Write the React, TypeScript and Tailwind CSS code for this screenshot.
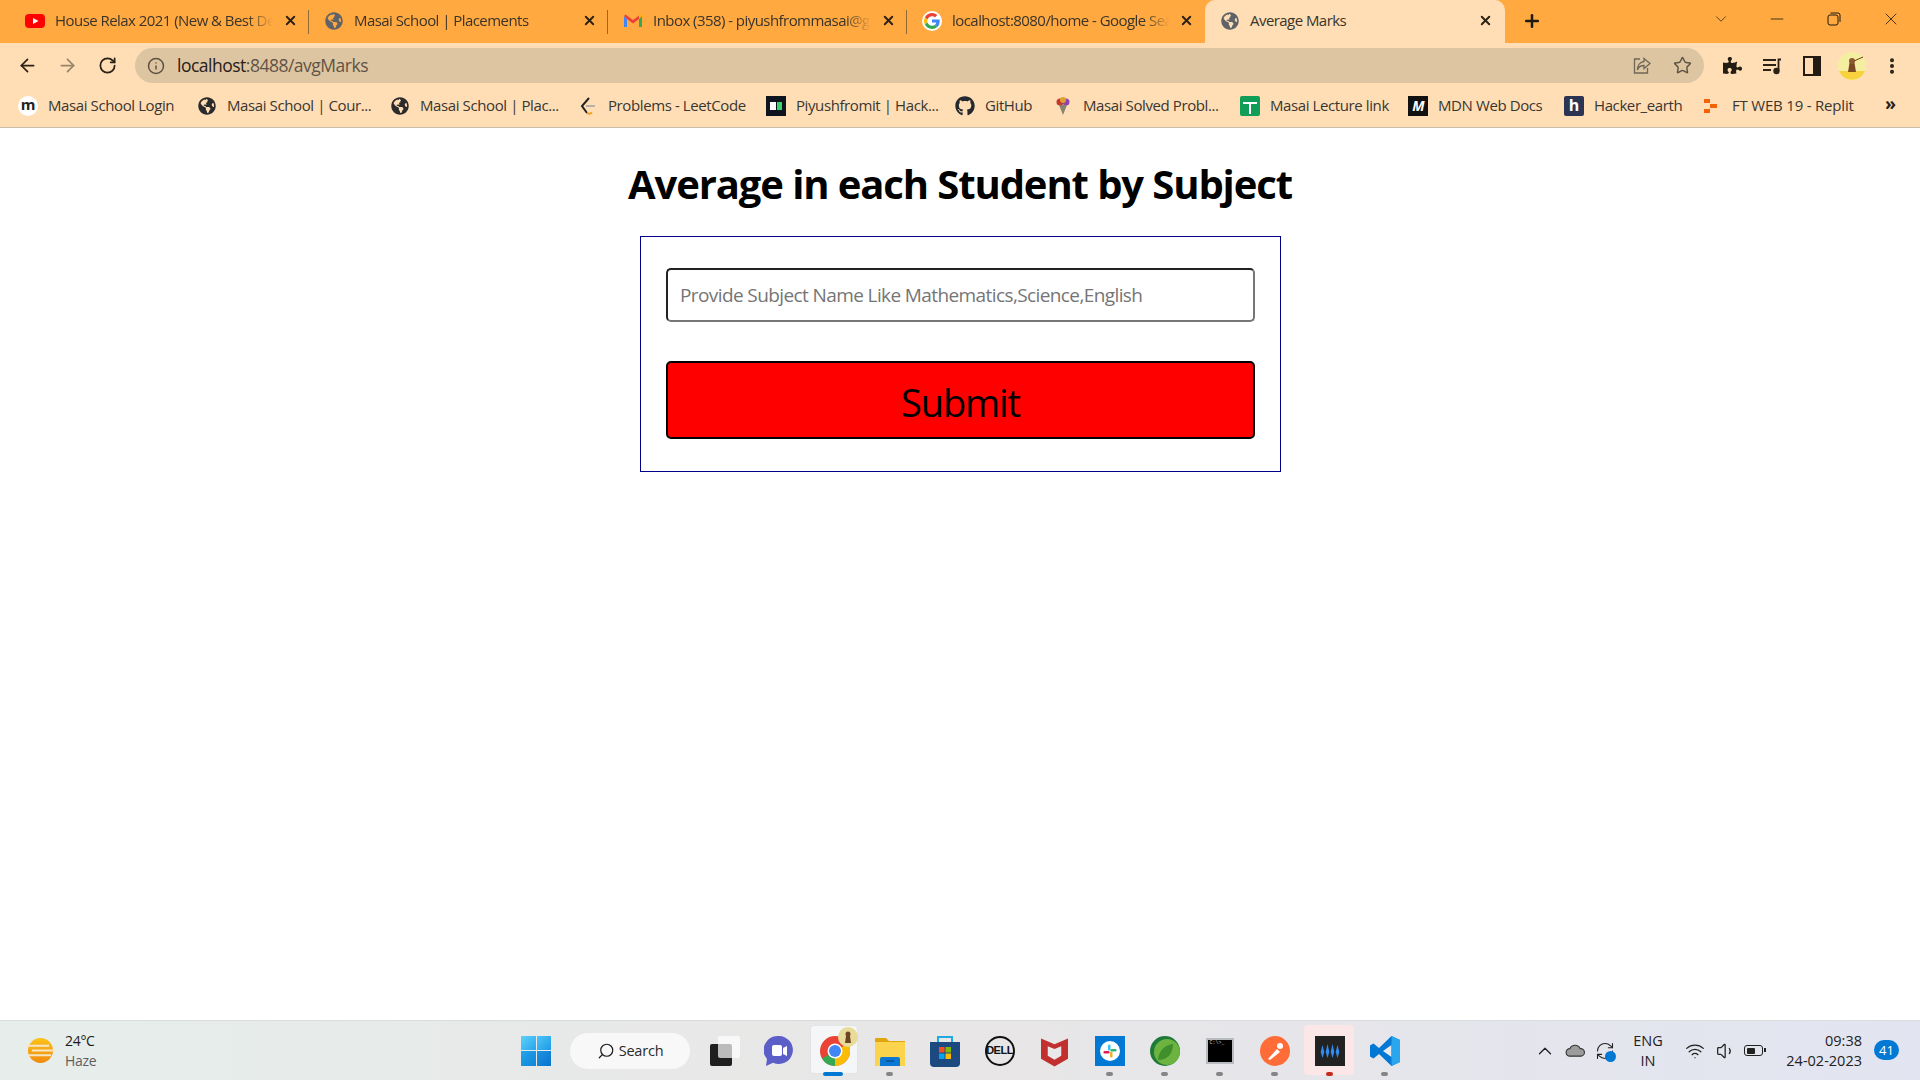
import React from "react";
import { ArrowLeft, ArrowRight, RotateCw, Info, Star, Minus, X, Plus, ChevronDown, ChevronUp, Search, MoreVertical, Wifi, Volume1, RefreshCw } from "lucide-react";
import { FaGlobeAmericas, FaGithub, FaPuzzlePiece } from "react-icons/fa";

const UI = "font-['Open_Sans','Noto_Sans',sans-serif]";

function YouTube() {
  return (
    <svg viewBox="0 0 20 20" className="w-5 h-5 shrink-0">
      <rect x="0" y="3" width="20" height="14" rx="4" fill="#f00" />
      <path d="M8 7l5.5 3L8 13z" fill="#fff" />
    </svg>
  );
}
function Gmail() {
  return (
    <svg viewBox="0 0 20 20" className="w-5 h-5 shrink-0">
      <path d="M1 5v11h3V8z" fill="#4285f4" />
      <path d="M16 8v8h3V5z" fill="#34a853" />
      <path d="M1 5l3 3 6 4.5L16 8l3-3-1.5-1.5L10 9 2.5 3.5z" fill="#ea4335" />
      <path d="M16 8l3-3V4l-1.5-.5L16 4.6z" fill="#fbbc04" />
    </svg>
  );
}
function GoogleG() {
  return (
    <div className="w-5 h-5 rounded-full bg-white flex items-center justify-center shrink-0">
      <svg viewBox="0 0 48 48" className="w-4 h-4">
        <path fill="#ea4335" d="M24 9.5c3.5 0 6.7 1.3 9.2 3.5l6.800-6.800C35.800 2.400 30.300 0 24 0 14.600 0 6.500 5.400 2.600 13.200l8 6.200C12.400 13.700 17.700 9.500 24 9.500z" />
        <path fill="#4285f4" d="M47 24.500c0-1.600-.2-3.200-.4-4.700H24v9h13c-.6 3-2.300 5.500-4.800 7.200l7.700 6C44.400 37.800 47 31.700 47 24.500z" />
        <path fill="#fbbc05" d="M10.600 28.600c-.5-1.400-.8-3-.8-4.600s.3-3.200.8-4.600l-8-6.200C.9 16.500 0 20.100 0 24s.9 7.500 2.600 10.800z" />
        <path fill="#34a853" d="M24 48c6.500 0 11.900-2.100 15.900-5.800l-7.700-6c-2.200 1.500-5 2.300-8.200 2.300-6.300 0-11.600-4.200-13.400-9.900l-8 6.200C6.500 42.600 14.600 48 24 48z" />
      </svg>
    </div>
  );
}
function Tab({ icon, title, w, textW, sep = true }: { icon: React.ReactNode; title: string; w: string; textW: string; sep?: boolean }) {
  return (
    <div className={`${w} h-[43px] flex items-center shrink-0 relative pb-[2px]`}>
      <div className="ml-[15px] w-5 flex justify-center shrink-0">{icon}</div>
      <div className={`ml-[10px] ${textW} whitespace-nowrap overflow-hidden text-[15px] tracking-[-0.55px] text-[#3a342a] [mask-image:linear-gradient(to_right,black_88%,transparent)]`}>{title}</div>
      <X size={15} strokeWidth={3} className="absolute right-[11px] top-[13px] text-[#2b2115]" />
      {sep && <div className="absolute right-0 top-[10px] h-[24px] w-px bg-[#8f6a33]" />}
    </div>
  );
}
function Bookmark({ icon, label, w }: { icon: React.ReactNode; label: string; w: string }) {
  return (
    <div className="flex items-center shrink-0">
      <div className="w-5 h-5 flex items-center justify-center shrink-0">{icon}</div>
      <div className={`ml-[10px] ${w} whitespace-nowrap text-[15px] tracking-[-0.4px] text-[#3a3630]`}>{label}</div>
    </div>
  );
}
function TaskIcon({ children, dot }: { children: React.ReactNode; dot?: string }) {
  return (
    <div className="w-[55px] h-[60px] flex items-center justify-center relative shrink-0">
      {children}
      {dot && <div className={`absolute bottom-[5px] left-[24px] w-[7px] h-[4px] rounded-full ${dot}`} />}
    </div>
  );
}

export default function App() {
  return (
    <div className={`w-[1920px] h-[1080px] flex flex-col overflow-hidden bg-white ${UI}`}>
      {/* Tab strip */}
      <div className="h-[43px] bg-[#ffa940] flex items-start shrink-0 pl-[10px]">
        <Tab w="w-[299px]" textW="w-[218px]" icon={<YouTube />} title="House Relax 2021 (New & Best Deep House Music)" />
        <Tab w="w-[299px]" textW="w-[218px]" icon={<FaGlobeAmericas size={18} className="text-[#5f6368]" />} title="Masai School | Placements" />
        <Tab w="w-[299px]" textW="w-[218px]" icon={<Gmail />} title="Inbox (358) - piyushfrommasai@gmail.com" />
        <Tab w="w-[298px]" textW="w-[218px]" sep={false} icon={<GoogleG />} title="localhost:8080/home - Google Search" />
        <div className="w-[300px] h-[43px] rounded-t-[10px] bg-[#ffdeb6] relative shrink-0">
          <div className="flex items-center h-full pb-[2px]">
            <div className="ml-[15px] w-5 flex justify-center"><FaGlobeAmericas size={18} className="text-[#5f6368]" /></div>
            <div className="ml-[10px] text-[15px] tracking-[-0.55px] text-[#3a342a] whitespace-nowrap">Average Marks</div>
          </div>
          <X size={15} strokeWidth={3} className="absolute right-[12px] top-[13px] text-[#2b2115]" />
        </div>
        <Plus size={20} strokeWidth={3} className="ml-[17px] mt-[11px] text-[#1f1a12]" />
        <div className="flex-1" />
        <ChevronDown size={18} strokeWidth={1} className="mt-[10px] mr-[37px] text-[#2b2115]" />
        <Minus size={20} strokeWidth={1} className="mt-[9px] mr-[40px] text-[#1f1a12]" />
        <svg viewBox="0 0 14 14" className="w-[14px] h-[14px] mt-[12px] mr-[40px]" fill="none" stroke="#1f1a12" strokeWidth="1">
          <rect x="1" y="3" width="10" height="10" rx="2" />
          <path d="M3.500 1h7.500a2 2 0 0 1 2 2v7" />
        </svg>
        <X size={20} strokeWidth={1} className="mt-[9px] mr-[19px] text-[#1f1a12]" />
      </div>

      {/* Toolbar */}
      <div className="h-[44px] bg-[#ffdeb6] flex items-center shrink-0 pl-[7px] pt-[1px]">
        <div className="w-10 flex justify-center"><ArrowLeft size={21} strokeWidth={2} className="text-[#2b2115]" /></div>
        <div className="w-10 flex justify-center"><ArrowRight size={21} strokeWidth={2} className="text-[#97846a]" /></div>
        <div className="w-10 flex justify-center"><RotateCw size={19} strokeWidth={2.2} className="text-[#2b2115]" /></div>
        <div className="ml-2 w-[1569px] h-[35px] rounded-full bg-[#dec5a1] flex items-center pl-[12px] pr-[11px]">
          <Info size={18} strokeWidth={2} className="text-[#5c5244] shrink-0" />
          <div className="ml-[12px] text-[17.500px] tracking-[-0.5px] whitespace-nowrap text-[#25201a]">
            localhost<span className="text-[#5e5446]">:8488/avgMarks</span>
          </div>
          <div className="flex-1" />
          <svg viewBox="0 0 20 20" className="w-5 h-5 text-[#6f675a]" fill="none" stroke="currentColor" strokeWidth="1.300">
            <path d="M8 3H2.500v14h13V12" />
            <path d="M12 2.500l6 5-6 5V9.500C9 9.500 6.500 11 5.500 14c0-4.500 2.500-8 6.500-8.500z" />
          </svg>
          <Star size={19} strokeWidth={1.8} className="ml-[21px] mr-[1px] text-[#5e5446]" />
        </div>
        <div className="ml-[8px] w-10 flex justify-center"><FaPuzzlePiece size={19} className="text-[#231c12]" /></div>
        <div className="w-10 flex justify-center">
          <svg viewBox="0 0 20 20" className="w-5 h-5 text-[#2b2115]" fill="none" stroke="currentColor" strokeWidth="1.800">
            <path d="M1 4h13M1 9h13M1 14h8" />
            <circle cx="14.500" cy="15" r="2.300" fill="currentColor" />
            <path d="M16.500 15V3.500H19" />
          </svg>
        </div>
        <div className="w-10 flex justify-center">
          <div className="w-[18px] h-[20px] border-[2.5px] border-[#231c12] border-r-[8px]" />
        </div>
        <div className="w-10 flex justify-center">
          <svg viewBox="0 0 28 28" className="w-7 h-7">
            <circle cx="14" cy="14" r="14" fill="#f4efa0" />
            <path d="M1 19h26a14 14 0 0 1-26 0z" fill="#f7d23e" />
            <path d="M10 20l1.500-9h5l1.500 9z" fill="#7a4a22" />
            <circle cx="14" cy="9" r="3" fill="#8a5a30" />
            <path d="M16 9l9-4" stroke="#6b3e1a" strokeWidth="1" />
          </svg>
        </div>
        <div className="w-10 flex justify-center"><MoreVertical size={20} strokeWidth={2.8} className="text-[#231c12]" /></div>
      </div>

      {/* Bookmarks */}
      <div className="h-[41px] bg-[#ffdeb6] border-b border-[#c9bda9] flex items-center shrink-0 pl-[18px] gap-[21px] pb-[3px]">
        <Bookmark w="w-[128px]" label="Masai School Login" icon={<div className="w-5 h-5 rounded-full bg-white flex items-center justify-center text-[15px] font-bold leading-none pb-[3px] text-[#222]">m</div>} />
        <Bookmark w="w-[142px]" label="Masai School | Cour..." icon={<FaGlobeAmericas size={18} className="text-[#2b2b2b]" />} />
        <Bookmark w="w-[137px]" label="Masai School | Plac..." icon={<FaGlobeAmericas size={18} className="text-[#2b2b2b]" />} />
        <Bookmark w="w-[137px]" label="Problems - LeetCode" icon={
          <svg viewBox="0 0 20 20" className="w-5 h-5" fill="none" strokeWidth="2">
            <path d="M11 2L4 10l5 7" stroke="#222" />
            <path d="M9 17c2 1 4 .5 5-.5" stroke="#f0a020" />
            <path d="M8 10h9" stroke="#b5b0a8" />
          </svg>} />
        <Bookmark w="w-[138px]" label="Piyushfromit | Hack..." icon={
          <div className="w-5 h-5 bg-[#0e141e] flex items-center justify-center gap-px">
            <span className="w-[6px] h-[8px] bg-white" /><span className="w-[5px] h-[8px] bg-[#39d46b]" />
          </div>} />
        <Bookmark w="w-[47px]" label="GitHub" icon={<FaGithub size={20} className="text-[#24292f]" />} />
        <Bookmark w="w-[136px]" label="Masai Solved Probl..." icon={
          <svg viewBox="0 0 20 20" className="w-5 h-5">
            <circle cx="7" cy="6" r="3.500" fill="#c0392b" /><circle cx="13" cy="6" r="3.500" fill="#8e44ad" />
            <circle cx="10" cy="4" r="3" fill="#e0a030" /><path d="M6 9h8l-4 10z" fill="#8a8172" />
          </svg>} />
        <Bookmark w="w-[117px]" label="Masai Lecture link" icon={
          <div className="w-5 h-5 bg-[#0f9d58] rounded-[2px] relative">
            <div className="absolute left-[3px] right-[3px] top-[6px] h-[2px] bg-white" />
            <div className="absolute top-[6px] bottom-[2px] left-[9px] w-[2px] bg-white" />
          </div>} />
        <Bookmark w="w-[105px]" label="MDN Web Docs" icon={<div className="w-5 h-5 bg-[#111] text-white text-[14px] italic leading-5 text-center font-bold tracking-[-1px]">M</div>} />
        <Bookmark w="w-[87px]" label="Hacker_earth" icon={<div className="w-5 h-5 bg-[#2c3454] rounded-[2px] text-white text-[16px] leading-[18px] text-center font-bold">h</div>} />
        <div className="flex items-center shrink-0 ml-[2px]">
          <svg viewBox="0 0 14 20" className="w-[14px] h-5">
            <path d="M0 3h6v4H0zM6 8h7v4H6zM0 13h6v4H0z" fill="#f26207" />
          </svg>
          <div className="ml-[14px] w-[121px] whitespace-nowrap text-[15px] tracking-[-0.2px] text-[#3a3630]">FT WEB 19 - Replit</div>
        </div>
        <div className="ml-[11px] text-[18px] leading-none font-bold text-[#2b2115] pb-[5px]">»</div>
      </div>

      {/* Page */}
      <main className="flex-1 bg-white flex flex-col items-center">
        <h1 className="mt-[28px] h-[55px] text-[40px] leading-[55px] font-bold text-black tracking-[-1.1px] whitespace-nowrap">Average in each Student by Subject</h1>
        <form className="mt-[25px] ml-[1px] w-[641px] h-[236px] border border-[#00008b] pt-[31px] pl-[25px]">
          <input
            placeholder="Provide Subject Name Like Mathematics,Science,English"
            className="block w-[589px] h-[54px] border-2 border-t-[#222] border-l-[#222] border-r-[#767676] border-b-[#767676] rounded-[5px] px-[12px] text-[19px] tracking-[-0.6px] placeholder:text-[#757575] outline-none"
          />
          <button type="button" className="mt-[39px] block w-[589px] h-[78px] border-2 border-black rounded-[5px] bg-[#f00] text-[38px] leading-none text-black tracking-[-1.1px] pt-[3px]">Submit</button>
        </form>
      </main>

      {/* Taskbar */}
      <div className="h-[60px] shrink-0 border-t border-[#d9dcdc] bg-gradient-to-r from-[#e6eeeb] via-[#e8e6e6] to-[#e2e5f1] flex items-center relative">
        <div className="w-[508px] flex items-center pl-[26px] shrink-0">
          <svg viewBox="0 0 30 28" className="w-[29px] h-[27px]">
            <defs><linearGradient id="sun" x1="0" y1="0" x2="0" y2="1"><stop offset="0" stopColor="#fbc318" /><stop offset="1" stopColor="#f08a10" /></linearGradient></defs>
            <circle cx="15" cy="14" r="13" fill="url(#sun)" />
            <path d="M0 9h24M6 14h24M2 19h24" stroke="#f5e6c8" strokeWidth="2" />
          </svg>
          <div className="ml-[10px] text-[14px] leading-[20px] tracking-[-0.3px]">
            <div className="text-[#1b1b1b]">24°C</div>
            <div className="text-[#5f5f5f]">Haze</div>
          </div>
        </div>
        <TaskIconWin />
        <div className="ml-[18px] w-[122px] h-[38px] rounded-full bg-[#f8f8f8] border border-[#e8e8e8] flex items-center justify-center shrink-0">
          <Search size={18} strokeWidth={1.6} className="-scale-x-100 text-[#1b1b1b]" />
          <span className="ml-[4px] text-[14.500px] tracking-[-0.2px] text-[#2a2a2a]">Search</span>
        </div>
        <div className="ml-[19px] w-[30px] h-[30px] relative shrink-0">
          <div className="absolute left-0 bottom-0 w-[22px] h-[22px] bg-[#1f1f1f] rounded-[2px]" />
          <div className="absolute right-0 top-0 w-[22px] h-[22px] bg-white/70 rounded-[2px]" />
        </div>
        <div className="ml-[24px] w-[30px] h-[32px] shrink-0">
          <svg viewBox="0 0 30 32" className="w-full h-full">
            <path d="M15 1a14 14 0 1 1-6 26.700L2 31l1-7A14 14 0 0 1 15 1z" fill="#5b5fc7" />
            <rect x="8" y="10" width="10" height="11" rx="2" fill="#fff" />
            <path d="M19 13l4-2v10l-4-2z" fill="#fff" />
          </svg>
        </div>
        <div className="ml-[13px] flex items-center shrink-0">
          <TaskIcon dot="">
            <div className="absolute left-[3px] top-[4px] w-[48px] h-[49px] rounded-[4px] bg-[#f5f6f8] border border-[#e3e4e7]" />
            <svg viewBox="0 0 30 30" className="w-[30px] h-[30px] relative">
              <circle cx="15" cy="15" r="15" fill="#ea4335" />
              <path d="M15 15L2 22.500A15 15 0 0 0 15 30z" fill="#34a853" />
              <path d="M15 15l13-7.500A15 15 0 0 1 15 30z" fill="#fbbc05" />
              <circle cx="15" cy="15" r="7.500" fill="#fff" />
              <circle cx="15" cy="15" r="6" fill="#4285f4" />
            </svg>
            <svg viewBox="0 0 20 20" className="absolute left-[31px] top-[6px] w-5 h-5">
              <circle cx="10" cy="10" r="10" fill="#e9dc9a" />
              <path d="M7 16l1-7h4l1 7z" fill="#6d4520" />
              <circle cx="10" cy="7" r="2.500" fill="#6d4520" />
            </svg>
            <div className="absolute bottom-[5px] left-[16px] w-[20px] h-[4px] rounded-full bg-[#0078d4]" />
          </TaskIcon>
          <TaskIcon dot="bg-[#858585]">
            <svg viewBox="0 0 30 30" className="w-[30px] h-[30px]">
              <path d="M0 3a1 1 0 0 1 1-1h10l3 3h16v4H0z" fill="#e0a50f" />
              <path d="M0 6h30v24H0z" fill="#fcd34d" />
              <path d="M5 23a2 2 0 0 1 2-2h16a2 2 0 0 1 2 2v7H5z" fill="#0a78d4" />
              <path d="M11 25h8" stroke="#063a6b" strokeWidth="1" />
            </svg>
          </TaskIcon>
          <TaskIcon>
            <svg viewBox="0 0 30 32" className="w-[30px] h-[32px]">
              <path d="M8 7V2h14v5" stroke="#21a9e1" strokeWidth="2" fill="none" />
              <path d="M0 7h30v21a4 4 0 0 1-4 4H4a4 4 0 0 1-4-4z" fill="#1c4a80" />
              <rect x="9" y="12" width="5.500" height="5.500" fill="#f25022" />
              <rect x="15.500" y="12" width="5.500" height="5.500" fill="#7fba00" />
              <rect x="9" y="18.500" width="5.500" height="5.500" fill="#00a4ef" />
              <rect x="15.500" y="18.500" width="5.500" height="5.500" fill="#ffb900" />
            </svg>
          </TaskIcon>
          <TaskIcon>
            <div className="w-[30px] h-[30px] rounded-full border-[2.5px] border-[#111] flex items-center justify-center bg-transparent">
              <span className="font-['Liberation_Sans',sans-serif] text-[11px] font-bold text-[#111] tracking-[-0.5px]">DELL</span>
            </div>
          </TaskIcon>
          <TaskIcon>
            <svg viewBox="0 0 28 32" className="w-[27px] h-[32px]">
              <path d="M0 3l14 6 14-6v21l-14 8-14-8z" fill="#c1302e" />
              <path d="M7 11l7 3 7-3v10l-7 4-7-4z" fill="#e9e7e9" />
            </svg>
          </TaskIcon>
          <TaskIcon dot="bg-[#858585]">
            <div className="w-[30px] h-[30px] bg-[#0078d4] flex items-center justify-center">
              <svg viewBox="0 0 20 20" className="w-5 h-5">
                <circle cx="10" cy="10" r="10" fill="#fff" />
                <rect x="8" y="3.500" width="2.500" height="6" rx="1.200" fill="#36c5f0" />
                <rect x="10.500" y="8" width="6" height="2.500" rx="1.200" fill="#2eb67d" />
                <rect x="10" y="10.500" width="2.500" height="6" rx="1.200" fill="#ecb22e" />
                <rect x="3.500" y="10" width="6" height="2.500" rx="1.200" fill="#e01e5a" />
              </svg>
            </div>
          </TaskIcon>
          <TaskIcon dot="bg-[#858585]">
            <svg viewBox="0 0 30 30" className="w-[30px] h-[30px]">
              <circle cx="15" cy="15" r="15" fill="#1f7a3a" />
              <circle cx="17" cy="16" r="13" fill="#6db33f" />
              <path d="M8 24C9 14 15 9 23 8c0 9-5 16-15 16z" fill="#3f8f2d" />
            </svg>
          </TaskIcon>
          <TaskIcon dot="bg-[#858585]">
            <div className="w-[28px] h-[26px] bg-black border-2 border-[#b8bcc0] text-[5px] leading-[7px] text-[#ccc] pl-[2px] overflow-hidden font-['Liberation_Mono',monospace]">C:\&gt;_</div>
          </TaskIcon>
          <TaskIcon dot="bg-[#858585]">
            <svg viewBox="0 0 30 30" className="w-[30px] h-[30px]">
              <circle cx="15" cy="15" r="15" fill="#ff6c37" />
              <path d="M8 23l9-10 3 3-10 8z" fill="#fff" />
              <circle cx="20" cy="10" r="3" fill="#fff" />
            </svg>
          </TaskIcon>
          <TaskIcon dot="bg-[#c42b1c]">
            <div className="absolute left-[2px] top-[4px] w-[50px] h-[50px] rounded-[4px] bg-[#fbe7e7]" />
            <div className="relative w-[30px] h-[30px] bg-[#222] flex items-center justify-center">
              <svg viewBox="0 0 24 24" className="w-[24px] h-[24px]" fill="#2f8cf0">
                <path d="M4.500 6l1.800 7-1.800 6-1.800-6zM9.500 5l1.800 8-1.800 6-1.800-6zM14.500 5l1.800 8-1.800 6-1.800-6zM19.500 6l1.800 7-1.800 6-1.800-6z" />
              </svg>
            </div>
          </TaskIcon>
          <TaskIcon dot="bg-[#858585]">
            <svg viewBox="0 0 30 30" className="w-[30px] h-[30px]">
              <path d="M21.500 0L30 4v22l-8.500 4L9 18l-5.500 4.500L0 20.500v-11L3.500 7.500 9 12z" fill="#0078d4" />
              <path d="M21.500 9L13 15l8.500 6z" fill="#e8eaee" />
              <path d="M21.500 0L30 4v22l-8.500 4z" fill="#2aa6ee" />
            </svg>
          </TaskIcon>
        </div>
        <div className="absolute left-[1536px] top-0 h-full flex items-center">
          <ChevronUp size={22} strokeWidth={1.4} className="text-[#222] ml-[-2px]" />
          <svg viewBox="0 0 22 16" className="ml-[9px] w-[21px] h-[15px]" stroke="#333" strokeWidth="1.200">
            <path d="M5 14a4 4 0 0 1 0-8 6 6 0 0 1 11 0 4 4 0 0 1 1 8z" fill="#9c9c9c" />
          </svg>
          <div className="relative ml-[9px]">
            <RefreshCw size={20} strokeWidth={1.300} className="text-[#222]" />
            <div className="absolute right-[-1px] bottom-[-1px] w-[11px] h-[11px] rounded-full bg-[#0078d4]" />
          </div>
        </div>
        <div className="absolute left-[1625px] top-0 h-full w-[46px] flex flex-col justify-center items-center text-[14.500px] leading-[20px] text-[#222]">
          <div>ENG</div><div>IN</div>
        </div>
        <div className="absolute left-[1685px] top-0 h-full flex items-center">
          <Wifi size={20} strokeWidth={1.500} className="text-[#222]" />
          <Volume1 size={20} strokeWidth={1.500} className="ml-[11px] text-[#222]" />
          <div className="ml-[8px] w-[19px] h-[11px] border-[1.500px] border-[#222] rounded-[3px] p-[1.500px] relative">
            <div className="w-[8px] h-full bg-[#222] rounded-[1px]" />
            <div className="absolute right-[-4px] top-[2px] w-[2px] h-[4px] bg-[#222]" />
          </div>
        </div>
        <div className="absolute right-[58px] top-0 h-full flex flex-col justify-center items-end text-[14.500px] leading-[20px] text-[#222]">
          <div>09:38</div><div>24-02-2023</div>
        </div>
        <div className="absolute left-[1874px] top-[19px] w-[25px] h-[20px] rounded-full bg-[#0078d4] text-white text-[13px] leading-[20px] text-center">41</div>
      </div>
    </div>
  );
}

function TaskIconWin() {
  return (
    <div className="ml-[13px] w-[30px] h-[30px] grid grid-cols-2 gap-px shrink-0">
      <div className="bg-gradient-to-br from-[#5fd0f8] to-[#21a6ee]" />
      <div className="bg-gradient-to-br from-[#4cc4f6] to-[#1c9ae8]" />
      <div className="bg-gradient-to-br from-[#25a4ec] to-[#0f84d8]" />
      <div className="bg-gradient-to-br from-[#1d93e2] to-[#0a74cc]" />
    </div>
  );
}
